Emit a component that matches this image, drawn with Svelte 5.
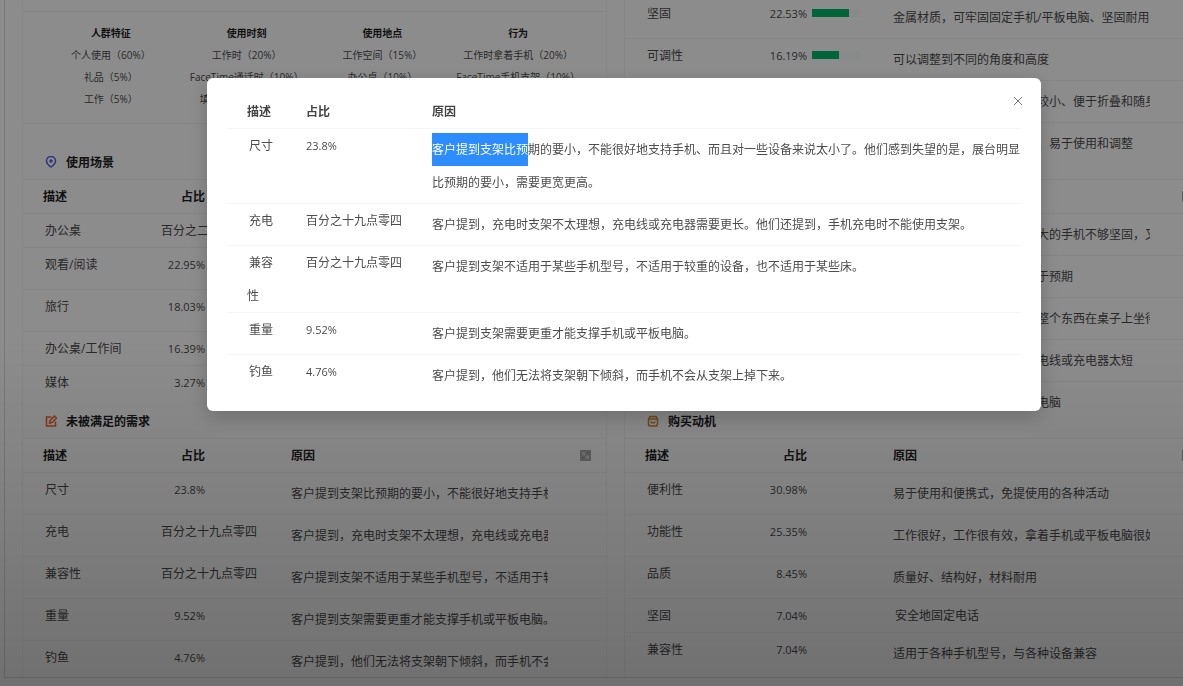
<script>
  let open = true;

  const personas = [
    {
      name: "人群特征",
      items: ["个人使用（60%）", "礼品（5%）", "工作（5%）"],
    },
    {
      name: "使用时刻",
      items: ["工作时（20%）", "FaceTime通话时（10%）", "填写资料期间（5%）"],
    },
    {
      name: "使用地点",
      items: ["工作空间（15%）", "办公桌（10%）", "厨房（5%）"],
    },
    {
      name: "行为",
      items: ["工作时拿着手机（20%）", "FaceTime手机支架（10%）", "看视频（5%）"],
    },
  ];

  const features = {
    bars: true,
    rows: [
      { name: "坚固", share: "22.53%", reason: "金属材质，可牢固固定手机/平板电脑、坚固耐用" },
      { name: "可调性", share: "16.19%", reason: "可以调整到不同的角度和高度" },
      { name: "便携性", share: "9.86%", reason: "设计非常轻巧、折叠后体积较小、便于折叠和随身携带" },
      { name: "易用性", share: "8.45%", reason: "可以调节高度、角度也灵活，易于使用和调整" },
    ],
  };

  const scenes = {
    title: "使用场景",
    icon: "pin",
    rows: [
      { name: "办公桌", share: "百分之二十六点二", short: true },
      { name: "观看/阅读", share: "22.95%" },
      { name: "旅行", share: "18.03%" },
      { name: "办公桌/工作间", share: "16.39%", short: true },
      { name: "媒体", share: "3.27%", short: true },
    ],
  };

  const complaints = {
    title: "差评原因",
    icon: "edit",
    rows: [
      { name: "不稳", share: "21.4%", reason: "支架对于那些重量或尺寸较大的手机不够坚固，又容易倒" },
      { name: "尺寸", share: "18.2%", reason: "支架的实际尺寸和高度都低于预期" },
      { name: "晃动", share: "12.5%", reason: "支架不太稳固、会晃动，让整个东西在桌子上坐得不稳" },
      { name: "充电", share: "9.52%", reason: "无法边充电边使用，附带的电线或充电器太短" },
      { name: "兼容性", share: "4.76%", reason: "无法稳定地支撑较大的平板电脑" },
    ],
  };

  const needs = {
    title: "未被满足的需求",
    icon: "edit",
    rows: [
      {
        name: "尺寸",
        share: "23.8%",
        marked: "客户提到支架比预",
        reason: "期的要小，不能很好地支持手机、而且对一些设备来说太小了。他们感到失望的是，展台明显比预期的要小，需要更宽更高。",
      },
      {
        name: "充电",
        share: "百分之十九点零四",
        reason: "客户提到，充电时支架不太理想，充电线或充电器需要更长。他们还提到，手机充电时不能使用支架。",
      },
      {
        name: "兼容性",
        share: "百分之十九点零四",
        reason: "客户提到支架不适用于某些手机型号，不适用于较重的设备，也不适用于某些床。",
      },
      { name: "重量", share: "9.52%", reason: "客户提到支架需要更重才能支撑手机或平板电脑。" },
      {
        name: "钓鱼",
        share: "4.76%",
        reason: "客户提到，他们无法将支架朝下倾斜，而手机不会从支架上掉下来。",
      },
    ],
  };

  const motives = {
    title: "购买动机",
    icon: "bag",
    rows: [
      { name: "便利性", share: "30.98%", reason: "易于使用和便携式，免提使用的各种活动" },
      { name: "功能性", share: "25.35%", reason: "工作很好，工作很有效，拿着手机或平板电脑很好用" },
      { name: "品质", share: "8.45%", reason: "质量好、结构好，材料耐用" },
      { name: "坚固", share: "7.04%", reason: "安全地固定电话", short: true },
      { name: "兼容性", share: "7.04%", reason: "适用于各种手机型号，与各种设备兼容" },
    ],
  };

  const cards = [features, scenes, complaints, needs, motives];

  function barWidth(share) {
    return Math.min(100, parseFloat(share) * 3.4);
  }
</script>

<main class="report">
  <section class="card">
    <div class="persona-head"></div>
    <div class="personas">
      {#each personas as persona}
        <div class="persona">
          <h3>{persona.name}</h3>
          {#each persona.items as item}
            <p>{item}</p>
          {/each}
        </div>
      {/each}
    </div>
  </section>

  {#each cards as card}
    <section class="card">
      {#if card.title}
        <h2 class="card-title">
          {#if card.icon === "pin"}
            <svg class="pin" viewBox="0 0 24 24">
              <path d="M12 22s-9-6-9-12a9 9 0 0 1 18 0c0 6-9 12-9 12z" />
              <circle cx="12" cy="10" r="2" />
            </svg>
          {:else if card.icon === "edit"}
            <svg class="edit" viewBox="0 0 24 24">
              <path d="M13 4H3v18h18v-9" />
              <path d="M9 16l1-5 9-9 4 4-9 9z" />
            </svg>
          {:else}
            <svg class="bag" viewBox="0 0 24 24">
              <path d="M6 3h12l3 5v11l-2 3H5l-2-3V8z" />
              <path d="M3 8h18M8 13c1 4 7 4 8 0" />
            </svg>
          {/if}
          {card.title}
        </h2>
      {/if}
      <table>
        {#if card.title}
          <thead>
            <tr>
              <th class="name">描述</th>
              <th class="share"><span class="share-value">占比</span></th>
              <th class="reason">
                <div class="reason-head">
                  {card === scenes ? "" : "原因"}
                  <button class="expand" aria-label="展开" on:click={() => (open = true)}>
                    <svg viewBox="0 0 12 12">
                      <rect x="1" y="1" width="10" height="10" />
                      <path d="M6 3h3v3M6 9H3V6M9 3L3 9" />
                    </svg>
                  </button>
                </div>
              </th>
            </tr>
          </thead>
        {/if}
        <tbody>
          {#each card.rows as row}
            <tr>
              <td class="name">{row.name}</td>
              <td class="share">
                <span class="share-value" class:num={row.share.endsWith("%")}>{row.share}</span>
                {#if card.bars}
                  <span class="bar"><span style="width: {barWidth(row.share)}%"></span></span>
                {/if}
              </td>
              <td class="reason" class:short={row.short}>
                <div class="clip">{row.marked || ""}{row.reason || "\u00a0"}</div>
              </td>
            </tr>
          {/each}
        </tbody>
      </table>
    </section>
  {/each}
</main>

{#if open}
  <div class="mask">
    <div class="modal" role="dialog" aria-modal="true" aria-label="未被满足的需求">
      <button class="close" aria-label="关闭" on:click={() => (open = false)}>
        <svg viewBox="0 0 10 10"><path d="M1 1l8 8M9 1l-8 8" /></svg>
      </button>
      <table>
        <thead>
          <tr>
            <th class="name">描述</th>
            <th class="share">占比</th>
            <th>原因</th>
          </tr>
        </thead>
        <tbody>
          {#each needs.rows as row}
            <tr>
              <td class="name">{row.name}</td>
              <td class="share" class:num={row.share.endsWith("%")}>{row.share}</td>
              <td class="reason">
                {#if row.marked}<mark>{row.marked}</mark>{/if}{row.reason}
              </td>
            </tr>
          {/each}
        </tbody>
      </table>
    </div>
  </div>
{/if}

<style>
  :global(body) {
    background: #fff;
    overflow: hidden;
    font-family: "Open Sans", "Noto Sans CJK SC", sans-serif;
    font-size: 12px;
    color: #4c4c4c;
  }

  .report {
    display: grid;
    grid-template-columns: repeat(2, minmax(585px, 1fr));
    grid-template-rows: 148px 259px 273px;
    column-gap: 17px;
    margin: -3px 0 0 4px;
    padding: 0 17px;
    border: 1px solid #dcdcdc;
    border-top: none;
    border-right: none;
  }

  .card {
    min-width: 0;
    box-sizing: border-box;
    border-left: 1px solid #f4f4f4;
    border-right: 1px solid #f4f4f4;
  }

  .card-title {
    display: flex;
    align-items: center;
    gap: 9px;
    height: 34px;
    margin: 0;
    padding-left: 22px;
    border-bottom: 1px solid #f4f4f4;
    font-size: 12px;
    font-weight: 700;
    color: #222;
  }

  .card-title svg {
    width: 12px;
    height: 12px;
    fill: none;
    stroke-width: 3;
  }

  .card-title .pin {
    stroke: #5b5be8;
  }

  .card-title .edit {
    stroke: #f0662c;
  }

  .card-title .bag {
    stroke: #c98a2e;
  }

  .persona-head {
    height: 14px;
    border-bottom: 1px solid #f0f0f0;
  }

  .personas {
    display: grid;
    grid-template-columns: repeat(4, 1fr);
    height: 112px;
    box-sizing: border-box;
    padding: 10px 20px 0;
    border-bottom: 1px solid #f4f4f4;
    font-size: 10px;
    line-height: 22px;
    text-align: center;
    white-space: nowrap;
  }

  .persona h3,
  .persona p {
    margin: 0;
    font-size: 10px;
  }

  .persona h3 {
    color: #222;
  }

  table {
    width: 100%;
    table-layout: fixed;
    border-collapse: separate;
    border-spacing: 0;
    line-height: 33px;
  }

  th,
  td {
    padding: 0;
    border-bottom: 1px solid #f4f4f4;
    text-align: left;
    vertical-align: top;
  }

  th {
    font-weight: 700;
    color: #222;
  }

  tbody tr:last-child td {
    border-bottom: none;
  }

  td.name {
    text-indent: 2px;
  }

  .card .name {
    width: 118px;
    padding-left: 20px;
  }

  .card .share {
    width: 130px;
    white-space: nowrap;
  }

  .share-value {
    display: inline-block;
    min-width: 44px;
    text-align: right;
    vertical-align: top;
  }

  .num {
    font-size: 11px;
  }

  .bar {
    display: inline-block;
    width: 48px;
    height: 8px;
    margin: 12px 0 0 2px;
    background: #f8fbf9;
    vertical-align: top;
  }

  .bar span {
    display: block;
    height: 100%;
    background: #00b96b;
  }

  td.reason {
    padding: 4px 0;
  }

  td.reason.short {
    padding: 0;
    text-indent: 2px;
  }

  .clip {
    width: 257px;
    overflow: hidden;
    white-space: nowrap;
  }

  .reason-head {
    display: flex;
    align-items: center;
    justify-content: space-between;
    height: 33px;
    padding-right: 15px;
  }

  .expand {
    display: flex;
    padding: 0;
    border: none;
    background: #ccc;
    cursor: pointer;
  }

  .expand svg {
    width: 11px;
    height: 11px;
    fill: none;
    stroke: #888;
  }

  .mask {
    position: fixed;
    inset: 0;
    padding: 78px 142px 0 207px;
    background: linear-gradient(rgba(0, 0, 0, 0.45) 50%, rgba(0, 0, 0, 0.5) 75%, rgba(0, 0, 0, 0.56));
  }

  .modal {
    position: relative;
    padding: 17px 20px 15px;
    border-radius: 6px;
    background: #fff;
    box-shadow: 0 6px 20px rgba(0, 0, 0, 0.2);
  }

  .modal th,
  .modal td {
    border-color: #f5f5f5;
  }

  .modal .name {
    width: 34px;
    padding: 0 25px 0 20px;
  }

  .modal .share {
    width: 126px;
  }

  .modal th {
    color: #444;
  }

  mark {
    display: inline-block;
    background: #2d8cff;
    color: #fff;
  }

  .close {
    position: absolute;
    top: 14px;
    right: 14px;
    display: flex;
    padding: 4px;
    border: none;
    background: none;
    cursor: pointer;
  }

  .close svg {
    width: 10px;
    height: 10px;
    fill: none;
    stroke: #777;
  }
</style>
